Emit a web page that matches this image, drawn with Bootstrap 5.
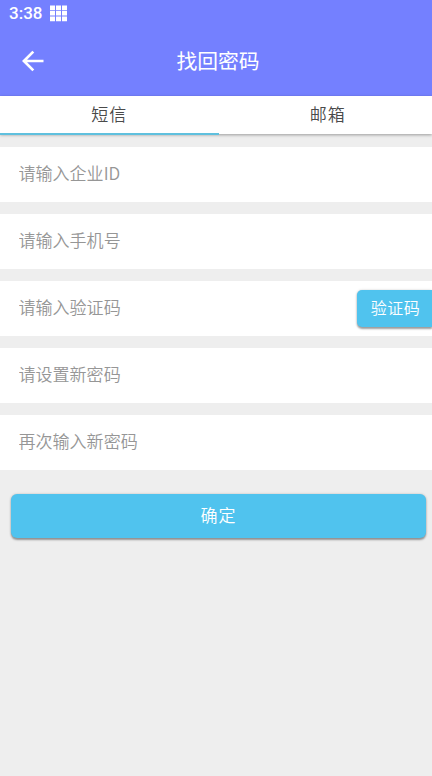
<!DOCTYPE html>
<html lang="zh-CN">

<head>
    <meta charset="UTF-8">
    <meta name="viewport" content="width=device-width, initial-scale=1.0">
    <title>找回密码</title>
    <link href="https://cdn.jsdelivr.net/npm/bootstrap@5.3.0/dist/css/bootstrap.min.css" rel="stylesheet">
    <style>
        body {
            background: #eee;
            font-family: Roboto, "Noto Sans CJK SC", sans-serif;
            font-size: 17px;
            min-height: 100vh;
            overflow: hidden;
        }

        .app-header {
            background: #7480ff;
            height: 95.5px;
        }

        .status-bar {
            height: 27px;
            padding-left: 9px;
            gap: 7.5px;
            font-size: 17px;
            font-weight: 500;
            line-height: 27px;
        }

        .title-bar {
            height: 69px;
            grid-template-columns: 66px 1fr 62px;
        }

        .back-link {
            padding-bottom: 1px;
        }

        .page-title {
            font-size: 20.8px;
            font-weight: 400;
            padding-top: 1px;
        }

        .mode-tabs {
            height: 38.8px;
            box-shadow: 0 1px 3px rgba(0, 0, 0, .35);
        }

        .mode-tabs .nav-link {
            color: #4a4a4a;
            height: 39px;
            padding: 0;
            letter-spacing: 1px;
            font-family: "Noto Sans CJK SC", sans-serif;
            font-weight: 350;
            border-bottom: 2px solid transparent;
            border-radius: 0;
        }

        .mode-tabs .tab-half {
            width: 218.5px;
            flex-shrink: 0;
        }

        .mode-tabs .nav-link.active {
            border-bottom-color: #5fc0de;
        }

        .field-list {
            padding-top: 12.5px;
            gap: 12px;
        }

        .field-row {
            height: 55px;
        }

        .field-row .form-control {
            font-family: "Noto Sans CJK SC", sans-serif;
            font-size: 17.05px;
            font-weight: 350;
            padding: 0 0 2.8px 18.5px;
        }

        .field-row .form-control::placeholder {
            color: #969696;
        }

        .btn-sky {
            --bs-btn-color: #fff;
            --bs-btn-bg: #50c3ee;
            --bs-btn-hover-color: #fff;
            --bs-btn-hover-bg: #3fb5e2;
            font-family: "Noto Sans CJK SC", sans-serif;
            font-weight: 350;
            border: 0;
            border-radius: 6px;
            box-shadow: 0 1.5px 2px rgba(0, 0, 0, .36), 0 0 3px rgba(0, 0, 0, .12);
        }

        .btn-code {
            width: 75px;
            height: 36.5px;
            padding: 0 0 3px 2px;
            font-size: 16px;
            letter-spacing: .5px;
            border-radius: 5px 0 0 5px;
        }

        .btn-submit {
            height: 44px;
            margin: 24.3px 6px 0 11px;
            padding: 0 0 2px;
            font-size: 17px;
            letter-spacing: 1px;
        }
    </style>
</head>

<body class="d-flex flex-column">
    <header class="app-header text-white flex-shrink-0">
        <div class="status-bar d-flex align-items-center">
            <span>3:38</span>
            <svg width="18" height="17" viewBox="0 0 18 17" fill="#fff">
                <path d="M0 .5h5v4.700H0zM6 .5h5v4.700H6zM12 .5h5v4.700h-5zM0 6.100h5v4.500H0zM6 6.100h5v4.500H6zM12 6.100h5v4.500h-5zM0 11.500h5v4.700H0zM6 11.500h5v4.700H6zM12 11.500h5v4.700h-5z" />
            </svg>
        </div>
        <div class="title-bar d-grid align-items-center">
            <a href="#" class="back-link d-flex justify-content-center" aria-label="返回">
                <svg width="22" height="22" viewBox="0 0 22 22" fill="none" stroke="#fff" stroke-width="2.700">
                    <path d="M21.500 11H2.500M11.300 1.600 1.900 11l9.400 9.400" />
                </svg>
            </a>
            <h1 class="page-title text-center mb-0">找回密码</h1>
        </div>
    </header>

    <ul class="mode-tabs nav bg-white flex-nowrap flex-shrink-0">
        <li class="nav-item tab-half">
            <a class="nav-link active d-flex align-items-center justify-content-center" href="#">短信</a>
        </li>
        <li class="nav-item tab-half">
            <a class="nav-link d-flex align-items-center justify-content-center" href="#">邮箱</a>
        </li>
    </ul>

    <form class="d-flex flex-column">
        <div class="field-list d-flex flex-column">
            <div class="field-row bg-white d-flex">
                <input type="text" class="form-control border-0 rounded-0" placeholder="请输入企业ID">
            </div>
            <div class="field-row bg-white d-flex">
                <input type="tel" class="form-control border-0 rounded-0" placeholder="请输入手机号">
            </div>
            <div class="field-row bg-white d-flex align-items-center">
                <input type="text" class="form-control h-100 border-0 rounded-0" placeholder="请输入验证码">
                <button type="button" class="btn btn-sky btn-code flex-shrink-0">验证码</button>
            </div>
            <div class="field-row bg-white d-flex">
                <input type="password" class="form-control border-0 rounded-0" placeholder="请设置新密码">
            </div>
            <div class="field-row bg-white d-flex">
                <input type="password" class="form-control border-0 rounded-0" placeholder="再次输入新密码">
            </div>
        </div>
        <button type="button" class="btn btn-sky btn-submit">确定</button>
    </form>

    <script src="https://cdn.jsdelivr.net/npm/bootstrap@5.3.0/dist/js/bootstrap.bundle.min.js"></script>
</body>

</html>
